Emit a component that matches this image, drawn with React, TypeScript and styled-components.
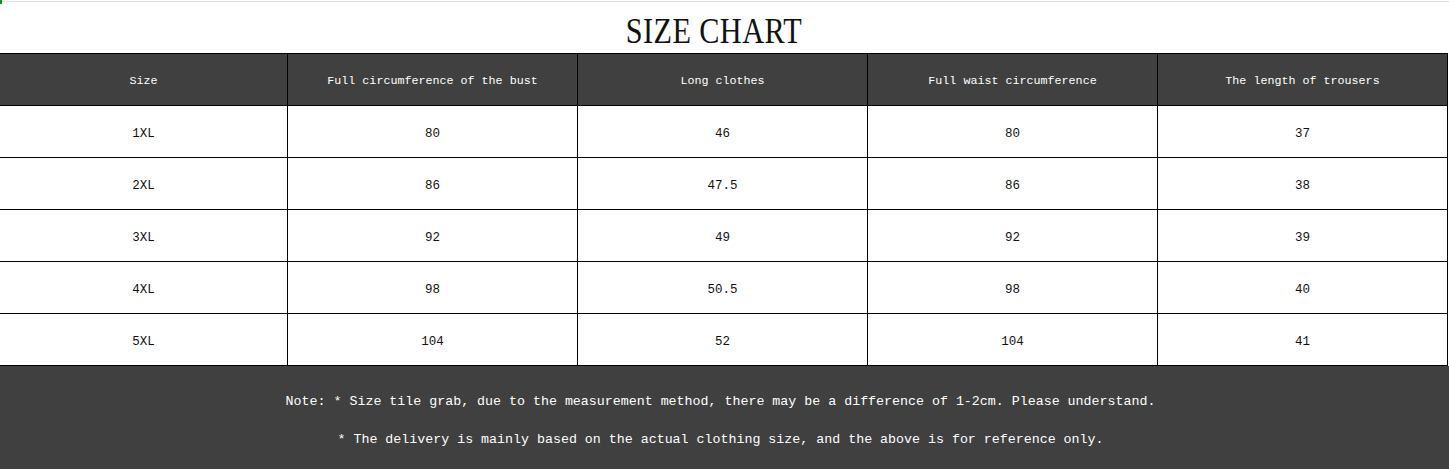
import React from "react";
import styled, { createGlobalStyle } from "styled-components";

const Global = createGlobalStyle`
  html, body { margin: 0; padding: 0; background: #ffffff; }
  body { width: 1449px; height: 469px; overflow: hidden; }
`;

const Page = styled.div`
  width: 1449px;
  height: 469px;
  display: flex;
  flex-direction: column;
  background: #ffffff;
  position: relative;
`;

const TopRule = styled.div`
  height: 1px;
  margin-top: 1px;
  background: #e2e2e2;
`;

const Corner = styled.div`
  position: absolute;
  left: 0;
  top: 0;
  width: 2px;
  height: 4px;
  background: #1f8a1f;
`;

const TitleBar = styled.div`
  height: 51px;
  display: flex;
  align-items: center;
  justify-content: center;
  padding-right: 22px;
  box-sizing: border-box;
`;

const Title = styled.h1`
  margin: 0;
  font-family: "Liberation Serif", "DejaVu Serif", serif;
  font-weight: 400;
  font-size: 36px;
  line-height: 1;
  color: #111111;
  letter-spacing: 0.5px;
  transform: scaleX(0.84);
  margin-top: 6px;
`;

const Table = styled.div`
  width: 1448px;
  display: grid;
  grid-template-columns: 288px 290px 290px 290px 290px;
  border-top: 1px solid #000000;
`;

const Cell = styled.div<{ $head?: boolean }>`
  height: 52px;
  box-sizing: border-box;
  border-right: 1px solid #000000;
  border-bottom: 1px solid #000000;
  display: flex;
  align-items: center;
  justify-content: center;
  padding-top: ${(p) => (p.$head ? "2px" : "4px")};
  background: ${(p) => (p.$head ? "#404040" : "#ffffff")};
  color: ${(p) => (p.$head ? "#ffffff" : "#111111")};
  font-family: "Liberation Mono", "DejaVu Sans Mono", monospace;
  font-size: ${(p) => (p.$head ? "11.7px" : "12.5px")};
  white-space: nowrap;
`;

const Footer = styled.div`
  flex: 1;
  background: #404040;
  display: flex;
  flex-direction: column;
  align-items: center;
  padding-top: 27px;
  gap: 20px;
  padding-right: 8px;
`;

const Note = styled.p`
  margin: 0;
  color: #ffffff;
  font-family: "Liberation Mono", "DejaVu Sans Mono", monospace;
  font-size: 13.3px;
  line-height: 18px;
  white-space: pre;
`;

const headers = [
  "Size",
  "Full circumference of the bust",
  "Long clothes",
  "Full waist circumference",
  "The length of trousers",
];

const rows = [
  ["1XL", "80", "46", "80", "37"],
  ["2XL", "86", "47.5", "86", "38"],
  ["3XL", "92", "49", "92", "39"],
  ["4XL", "98", "50.5", "98", "40"],
  ["5XL", "104", "52", "104", "41"],
];

export default function App() {
  return (
    <Page>
      <Global />
      <Corner />
      <TopRule />
      <TitleBar>
        <Title>SIZE CHART</Title>
      </TitleBar>
      <Table>
        {headers.map((h) => (
          <Cell $head key={h}>
            {h}
          </Cell>
        ))}
        {rows.map((r, i) =>
          r.map((v, j) => <Cell key={`${i}-${j}`}>{v}</Cell>)
        )}
      </Table>
      <Footer>
        <Note>
          Note: * Size tile grab, due to the measurement method, there may be a difference of 1-2cm. Please understand.
        </Note>
        <Note>* The delivery is mainly based on the actual clothing size, and the above is for reference only.</Note>
      </Footer>
    </Page>
  );
}
